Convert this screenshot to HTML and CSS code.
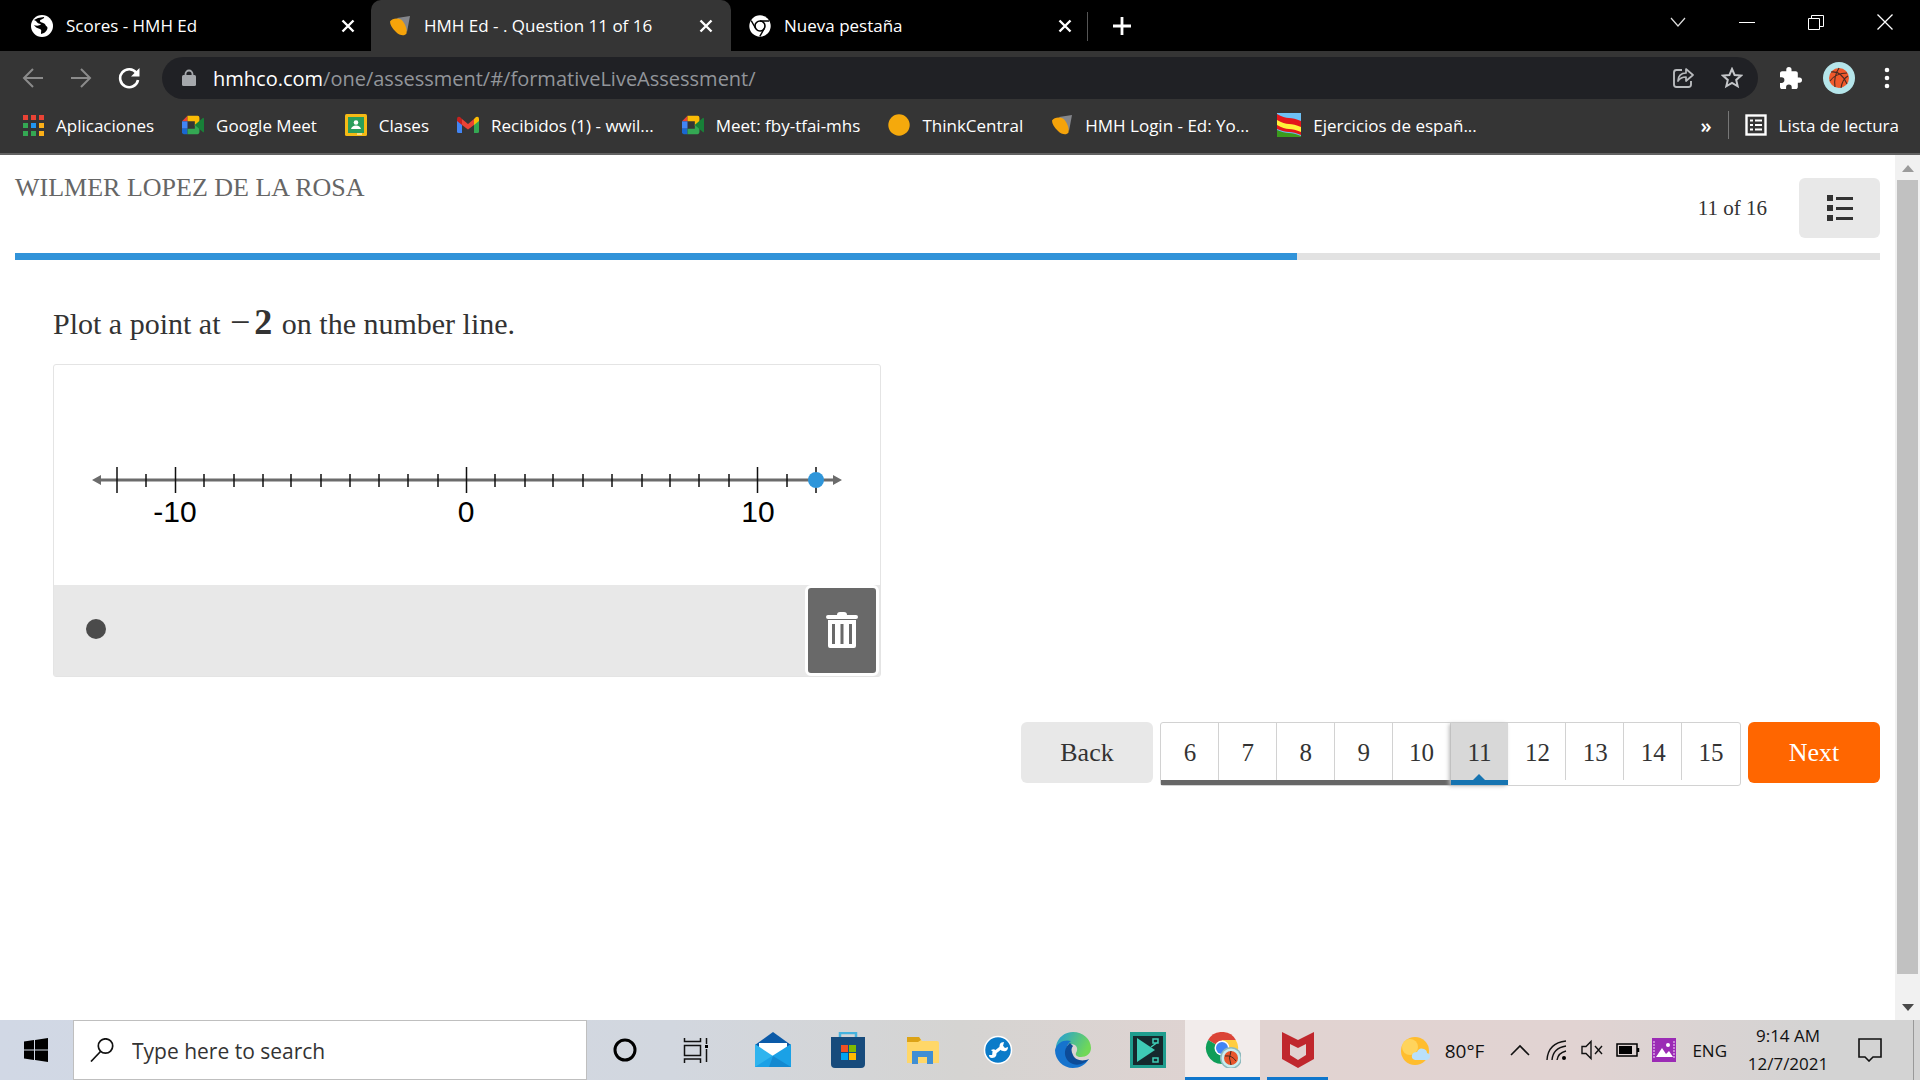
FILE: index.html
```html
<!DOCTYPE html>
<html lang="es">
<head>
<meta charset="utf-8">
<title>HMH Ed - . Question 11 of 16</title>
<link rel="stylesheet" href="styles.css">
</head>
<body>
<svg class="defs" aria-hidden="true">
  <symbol id="x" viewBox="0 0 22 22"><path d="M5.500 5.500l11 11M16.500 5.500l-11 11" stroke="#fff" stroke-width="2.400"/></symbol>
  <symbol id="hmh" viewBox="0 0 22 22"><path d="M8 3L21 1 18 17Z" fill="#85878c"/><path d="M1 6.500C3 3.500 8 2.500 12 4.500c4 3 6.500 10 5.500 14-2 3-7 2-10.500-1.500C3 13.500 1 9.500 1 6.500Z" fill="#f5a30a"/></symbol>
  <symbol id="meet" viewBox="0 0 24 22"><path d="M6 1L0 7h6Z" fill="#ea4335"/><path d="M0 7h6v8H0Z" fill="#4285f4"/><path d="M0 15h6v6H2q-2 0-2-2Z" fill="#1967d2"/><path d="M6 1h11q2 0 2 2v5l-5 4V7H6Z" fill="#fbbc04"/><path d="M6 15h8v-4l5-4v12q0 2-2 2H6Z" fill="#34a853"/><path d="M14 11l9-8q1 0 1 1v14q0 1-1 1Z" fill="#188038"/></symbol>
</svg>

<header class="browser">
  <div class="tabs">
    <div class="tab">
      <svg class="ico" viewBox="0 0 22 22"><circle cx="11" cy="11" r="11" fill="#fff"/><path d="M3 5l4-2 6-1c1 2-4 2-4 4 0 2 5 1 6 5 3 1 1 5-2 7l-3 1c0-3 1-4-1-5-3-1-5-2-6-4 2 1 6 1 7-1-2 0-4-1-5-3Z" fill="#000"/></svg>
      <span class="tab-title">Scores - HMH Ed</span>
      <button class="bare" aria-label="Close tab"><svg class="ico"><use href="#x"/></svg></button>
    </div>
    <div class="tab active">
      <svg class="ico"><use href="#hmh"/></svg>
      <span class="tab-title">HMH Ed - . Question 11 of 16</span>
      <button class="bare" aria-label="Close tab"><svg class="ico"><use href="#x"/></svg></button>
    </div>
    <div class="tab last">
      <svg class="ico" viewBox="0 0 22 22"><circle cx="11" cy="11" r="10.700" fill="#fff"/><circle cx="11" cy="11" r="5" fill="none" stroke="#000" stroke-width="1.600"/><path d="M11 6h9M6.700 13.500L2.200 5.700M15.300 13.500l-4.500 7.800" stroke="#000" stroke-width="1.400"/></svg>
      <span class="tab-title">Nueva pestaña</span>
      <button class="bare" aria-label="Close tab"><svg class="ico"><use href="#x"/></svg></button>
    </div>
    <button class="bare newtab" aria-label="New tab"><svg class="ico" viewBox="0 0 22 22"><path d="M11 2v18M2 11h18" stroke="#fff" stroke-width="2.800"/></svg></button>
    <div class="window">
      <button class="bare" aria-label="Search tabs"><svg class="ico" viewBox="0 0 22 22"><path d="M4 7l7 8 7-8" fill="none" stroke="#ddd" stroke-width="1.200"/></svg></button>
      <button class="bare" aria-label="Minimize"><svg class="ico" viewBox="0 0 22 22"><path d="M3 11.500h16" stroke="#fff"/></svg></button>
      <button class="bare" aria-label="Restore"><svg class="ico" viewBox="0 0 22 22"><path d="M3.500 7.500h11v11h-11ZM6.500 7.500v-3h12v11h-4" fill="none" stroke="#fff"/></svg></button>
      <button class="bare" aria-label="Close window"><svg class="ico" viewBox="0 0 22 22"><path d="M3.500 3.500l15 15M18.500 3.500l-15 15" stroke="#fff" stroke-width="1.300"/></svg></button>
    </div>
  </div>

  <div class="toolbar">
    <div class="nav-buttons">
      <button class="bare" aria-label="Back"><svg class="ico" viewBox="0 0 22 22"><path d="M21 11H3M11 2L2 11l9 9" fill="none" stroke="#8b8b8b" stroke-width="2"/></svg></button>
      <button class="bare" aria-label="Forward"><svg class="ico" viewBox="0 0 22 22"><path d="M1 11h18M11 2l9 9-9 9" fill="none" stroke="#8b8b8b" stroke-width="2"/></svg></button>
      <button class="bare" aria-label="Reload"><svg class="ico" viewBox="0 0 22 22"><path d="M18.500 6A9 9 0 1 0 20 13" fill="none" stroke="#fff" stroke-width="2.600"/><path d="M21.500 1v8.500H13Z" fill="#fff"/></svg></button>
    </div>
    <div class="omnibox">
      <svg class="lock" viewBox="0 0 14 18"><path d="M3.500 8V5a3.500 3.500 0 0 1 7 0v3" fill="none" stroke="#a5a8ac" stroke-width="1.800"/><rect y="6" width="14" height="11" rx="1.500" fill="#a5a8ac"/></svg>
      <span class="url"><b>hmhco.com</b>/one/assessment/#/formativeLiveAssessment/</span>
      <button class="bare" aria-label="Share"><svg class="ico" viewBox="0 0 22 22"><path d="M10 3H4.500Q2 3 2 5.500v12Q2 20 4.500 20h12q2.500 0 2.500-2.500V14" fill="none" stroke="#b8babd" stroke-width="1.900"/><path d="M6 14c0-5 3-8 8-8V2l7 6-7 6v-4c-4 0-6 1-8 4Z" fill="none" stroke="#b8babd" stroke-width="1.700" stroke-linejoin="round"/></svg></button>
      <button class="bare" aria-label="Bookmark"><svg class="ico" viewBox="0 0 22 22"><path d="M11 2l2.600 6 6.500.600-4.900 4.300 1.500 6.400L11 16l-5.700 3.300 1.500-6.400L1.900 8.600 8.400 8Z" fill="none" stroke="#c4c6c9" stroke-width="2"/></svg></button>
    </div>
    <div class="tools">
      <button class="bare" aria-label="Extensions"><svg class="ico" viewBox="2 1 21 21"><path d="M20.500 11H19V7c0-1.100-.900-2-2-2h-4V3.500a2.500 2.500 0 0 0-5 0V5H4c-1.100 0-2 .900-2 2v3.800h1.500a2.700 2.700 0 0 1 0 5.400H2V20c0 1.100.900 2 2 2h3.800v-1.500a2.700 2.700 0 0 1 5.400 0V22H17c1.100 0 2-.900 2-2v-4h1.500a2.500 2.500 0 0 0 0-5Z" fill="#fff"/></svg></button>
      <button class="bare" aria-label="Profile"><svg class="avatar" viewBox="0 0 32 32"><circle cx="16" cy="16" r="16" fill="#b5e5ea"/><circle cx="16" cy="16" r="10" fill="#f0592b"/><path d="M8 10c7-1 12 2 16 12M7 19c3-5 10-8 17-8M12 25c-1-7 0-13 4-19M18 26c1-6 3-10 7-12" fill="none" stroke="#4a2a20" stroke-width="1.100"/></svg></button>
      <button class="bare" aria-label="Menu"><svg class="ico" viewBox="0 0 22 22"><g fill="#fff"><circle cx="11" cy="3" r="2.300"/><circle cx="11" cy="11" r="2.300"/><circle cx="11" cy="19" r="2.300"/></g></svg></button>
    </div>
  </div>

  <nav class="bookmarks">
    <a href="#"><svg class="ico" viewBox="0 0 22 22"><path d="M1 1h5v5H1ZM9 1h5v5H9ZM17 1h5v5h-5Z" fill="#ea4335"/><path d="M1 9h5v5H1ZM1 17h5v5H1ZM9 17h5v5H9Z" fill="#34a853"/><path d="M9 9h5v5H9Z" fill="#2196f3"/><path d="M17 9h5v5h-5ZM17 17h5v5h-5Z" fill="#fbb018"/></svg>Aplicaciones</a>
    <a href="#"><svg class="ico"><use href="#meet"/></svg>Google Meet</a>
    <a href="#"><svg class="ico" viewBox="0 0 22 22"><rect width="22" height="22" rx="1.500" fill="#f5ba15"/><rect x="3" y="3" width="16" height="16" fill="#2b9e5b"/><circle cx="11" cy="8.500" r="2.300" fill="#fff"/><path d="M6 15q1-3.500 5-3.500t5 3.500Z" fill="#fff"/><path d="M12 19h5v2h-5Z" fill="#fff" opacity=".5"/></svg>Clases</a>
    <a href="#"><svg class="ico" viewBox="0 0 22 22"><path d="M0 6l5 4v9H1.500Q0 19 0 17.500Z" fill="#4285f4"/><path d="M22 6l-5 4v9h3.500q1.500 0 1.500-1.500Z" fill="#34a853"/><path d="M5 5l6 5 6-5v6l-6 4.500L5 11Z" fill="#ea4335"/><path d="M0 7V5q0-3 3-2l2 2v6Z" fill="#c5221f"/><path d="M22 7V5q0-3-3-2l-2 2v6Z" fill="#fbbc04"/></svg>Recibidos (1) - wwil...</a>
    <a href="#"><svg class="ico"><use href="#meet"/></svg>Meet: fby-tfai-mhs</a>
    <a href="#"><svg class="ico" viewBox="0 0 22 22"><circle cx="11" cy="11" r="10.700" fill="#f5a90c"/></svg>ThinkCentral</a>
    <a href="#"><svg class="ico"><use href="#hmh"/></svg>HMH Login - Ed: Yo...</a>
    <a href="#"><svg class="flag" viewBox="0 0 24 24"><path d="M0 0h24v24H0Z" fill="#6ec1f5"/><path d="M0 1q7 4 12 4t12 3v14q-7-3-12-3T0 16Z" fill="#e3171b"/><path d="M0 7q7 4 12 4t12 3v5q-7-3-12-3T0 12Z" fill="#fff23a"/><path d="M0 17q7 3 12 3t12 3v1H0Z" fill="#3a9a1c"/></svg>Ejercicios de españ...</a>
    <button class="bare more" aria-label="More bookmarks">»</button>
    <a class="reading" href="#"><svg class="ico" viewBox="0 0 22 22"><rect x="1.500" y="1.500" width="19" height="19" fill="none" stroke="#fff" stroke-width="2.400"/><path d="M5 6.500h3M5 11h3M5 15.500h3M10 6.500h7M10 11h7M10 15.500h7" stroke="#fff" stroke-width="2.200"/></svg>Lista de lectura</a>
  </nav>
</header>

<div class="viewport">
  <main class="page">
    <div class="head">
      <span class="student">WILMER LOPEZ DE LA ROSA</span>
      <span class="count">11 of 16</span>
      <button class="list-button" aria-label="Question list"><svg viewBox="0 0 26 26"><path d="M0 0h6v6H0ZM0 10h6v6H0ZM0 20h6v6H0ZM9 2h17v3H9ZM9 12h17v3H9ZM9 22h17v3H9Z" fill="#333"/></svg></button>
    </div>
    <div class="progress"><div class="progress-fill" style="width:68.75%"></div></div>

    <section class="question">
      <p class="prompt">Plot a point at <span class="math"><span class="minus">−</span><b>2</b></span> on the number line.</p>
      <div class="card">
        <svg class="line" viewBox="0 0 826 220">
          <path d="M46 115h736" stroke="#6b6b6b" stroke-width="3"/>
          <path d="M38 115l9-5v10ZM788 115l-9-5v10Z" fill="#6b6b6b"/>
          <path d="M92 109v13M150 109v13M180 109v13M209 109v13M237 109v13M267 109v13M296 109v13M325 109v13M354 109v13M384 109v13M441 109v13M471 109v13M499 109v13M529 109v13M558 109v13M588 109v13M616 109v13M645 109v13M675 109v13M733 109v13" stroke="#111" stroke-width="1.500"/>
          <path d="M63 102v26M121.500 102v26M412.500 102v26M703.500 102v26M762 102v26" stroke="#111" stroke-width="1.500"/>
          <circle cx="762" cy="115" r="8" fill="#2f96da"/>
          <g class="labels"><text x="121" y="157">-10</text><text x="412" y="157">0</text><text x="704" y="157">10</text></g>
        </svg>
        <div class="card-tools">
          <button class="bare point-tool" aria-label="Point"><svg class="point" viewBox="0 0 20 20"><circle cx="10" cy="10" r="10" fill="#4b4b4b"/></svg></button>
          <button class="trash" aria-label="Delete"><svg viewBox="0 0 32 36"><path d="M11 3Q11 0 14 0h4q3 0 3 3h9q2 0 2 2t-2 2H2Q0 7 0 5t2-2ZM2 8h28v26q0 2-2 2H4q-2 0-2-2Z" fill="#fff"/><path d="M7.500 12v20M16 12v20M24.500 12v20" stroke="#696969" stroke-width="3"/></svg></button>
        </div>
      </div>
    </section>

    <nav class="pager">
      <button class="back">Back</button>
      <div class="pages">
        <button class="done">6</button><button class="done">7</button><button class="done">8</button><button class="done">9</button><button class="done">10</button><button class="current">11</button><button>12</button><button>13</button><button>14</button><button>15</button>
      </div>
      <button class="next">Next</button>
    </nav>
  </main>
  <div class="scrollbar">
    <svg viewBox="0 0 12 8"><path d="M0 8L6 1l6 7Z" fill="#9b9b9b"/></svg>
    <div class="thumb"></div>
    <svg viewBox="0 0 12 8"><path d="M0 0l6 7 6-7Z" fill="#4a4a4a"/></svg>
  </div>
</div>

<footer class="taskbar">
  <button class="start" aria-label="Start"><svg class="t24" viewBox="0 0 24 24"><path d="M0 3.400L10 2v9.500H0ZM11 1.900L24 0v11.500H11ZM0 12.500h10V22L0 20.600ZM11 12.500h13V24l-13-1.900Z"/></svg></button>
  <label class="search"><svg class="t24" viewBox="0 0 24 24"><circle cx="15.500" cy="8" r="7.200" fill="none" stroke="#111" stroke-width="1.700"/><path d="M10.500 13.500L1 23.500" stroke="#111" stroke-width="1.700"/></svg><input type="text" placeholder="Type here to search" aria-label="Search"></label>
  <div class="apps">
    <button aria-label="Cortana"><svg viewBox="0 0 36 36"><circle cx="18" cy="18" r="10" fill="none" stroke="#000" stroke-width="3"/></svg></button>
    <button class="views" aria-label="Task view"><svg viewBox="0 0 36 36"><path d="M6.500 6v3.500h16V6M6.500 13.500h16v10h-16ZM6.500 31v-4h16v4M28.500 6v6M28.500 17v13" fill="none" stroke="#111" stroke-width="1.500"/><path d="M27 13h3v3h-3Z"/></svg></button>
    <button aria-label="Mail"><svg viewBox="0 0 36 36"><path d="M0 13L18 0l18 13-18 12Z" fill="#0b5aa8"/><path d="M4 11h28v14H4Z" fill="#fff"/><path d="M0 12l18 12v11H0Z" fill="#2fb4ee"/><path d="M36 12L0 35h36Z" fill="#1ba1e6"/><path d="M18 24l18 11H14Z" fill="#1489d0"/></svg></button>
    <button aria-label="Store"><svg viewBox="0 0 36 36"><path d="M10 9V1h16v8" fill="none" stroke="#45b3df" stroke-width="2.500"/><path d="M1 5h34v27q0 4-4 4H5q-4 0-4-4Z" fill="#174b7c"/><path d="M11 13h7v7h-7Z" fill="#f25022"/><path d="M19 13h7v7h-7Z" fill="#7fba00"/><path d="M11 21h7v7h-7Z" fill="#00a4ef"/><path d="M19 21h7v7h-7Z" fill="#ffb900"/></svg></button>
    <button aria-label="File Explorer"><svg viewBox="0 0 36 36"><path d="M2 5h12l3 4h15q2 0 2 2v20H2Z" fill="#ffd768"/><path d="M2 5h12l2 3-3 2H2Z" fill="#dca316"/><path d="M7 19h21v13h-6v-7h-9v7H7Z" fill="#408fd4"/></svg></button>
    <button aria-label="Support tool"><svg viewBox="0 0 36 36"><circle cx="18" cy="18" r="13.500" fill="#0a7bc9" stroke="#fff" stroke-width="1.500"/><path d="M13 22l10-8" stroke="#fff" stroke-width="3"/><path d="M16 19q2 7-4 7-3 0-3-3l3 0 1-3-2-2q4-2 5 1ZM20 17q-2-7 4-7l-1 4 2 2 3-1q0 5-5 4-2 0-3-2Z" fill="#fff"/></svg></button>
    <button aria-label="Edge"><svg viewBox="0 0 36 36"><defs><linearGradient id="eg" x2="1" y2=".4"><stop stop-color="#219bdc"/><stop offset="1" stop-color="#70d857"/></linearGradient></defs><path d="M1 14C3 5 10 0 18 0c10 0 18 7 18 16 0 6-5 9-10 9-4 0-6-2-5-4 3-5 0-9-5-9-6 0-12 3-15 7Z" fill="url(#eg)"/><path d="M0 18C2 10 10 7 16 9c-6 4-6 14 1 19 5 3 11 3 17-1-4 6-9 9-16 9C8 36 0 28 0 18Z" fill="#1673cd"/><path d="M15 11c-8 6-6 18 3 21 6 2 12-1 16-5-7 3-14 1-16-4-2-4-2-7 0-9Z" fill="#0d4c98"/></svg></button>
    <button aria-label="Video editor"><svg viewBox="0 0 36 36"><path d="M0 0h36v36H0Z" fill="#1f9d8e"/><path d="M3 4h30v29H3Z" fill="#15292d"/><path d="M7 6l18 12L7 30Z" fill="#3ecbb5"/><path d="M23 7h5v4h-5ZM28 10l-7 5M23 26h5v4h-5Z" stroke="#3ecbb5" stroke-width="1.500" fill="none"/></svg></button>
    <button class="open" aria-label="Chrome"><svg viewBox="0 0 36 36"><circle cx="17" cy="16" r="16" fill="#fff"/><path d="M17 16L3.100 8a16 16 0 0 1 27.800 0Z" fill="#db4437"/><path d="M17 16L3.100 8A16 16 0 0 0 17 32l7-12Z" fill="#0f9d58"/><path d="M17 16l0 16A16 16 0 0 0 30.900 8H17Z" fill="#ffcd40"/><circle cx="17" cy="16" r="7.500" fill="#fff"/><circle cx="17" cy="16" r="6" fill="#4285f4"/><circle cx="26" cy="26" r="11" fill="#8fb9bd"/><circle cx="26" cy="26" r="9.500" fill="#c8eef0"/><circle cx="26" cy="26" r="7" fill="#e8562b"/><path d="M20 24q7-1 11 5M26 19q-3 7 0 14" fill="none" stroke="#4a2a20"/></svg></button>
    <button class="running" aria-label="McAfee"><svg viewBox="0 0 36 36"><path d="M2 0l16 8L34 0v27l-16 9-16-9ZM10 12v11l8 5 8-5V12l-8 4Z" fill="#c0272d" fill-rule="evenodd"/></svg></button>
  </div>
  <div class="tray">
    <div class="weather"><svg class="t30" viewBox="0 0 30 30"><circle cx="14" cy="15" r="14" fill="#ffbd2e"/><circle cx="9" cy="11" r="8" fill="#ffd45c"/><path d="M14 24q-4-1-3-5 1-3 5-3 2-5 7-3 3 1 3 4 4 1 3 4-1 3-4 3Z" fill="#b9e0fb"/></svg>80°F</div>
    <div class="tray-icons">
      <svg class="t24" viewBox="0 0 24 24"><path d="M3 17l9-9 9 9" fill="none" stroke="#111" stroke-width="1.600"/></svg>
      <svg class="t24" viewBox="0 0 24 24"><path d="M3 22Q4 5 22 3M8 22Q9 10 22 8M13 22q1-7 9-9" fill="none" stroke="#111" stroke-width="1.400"/><circle cx="20" cy="20" r="2"/></svg>
      <svg class="t24" viewBox="0 0 24 24"><path d="M2 8.500h4l5-5v17l-5-5H2ZM15 8l7 8M22 8l-7 8" fill="none" stroke="#111" stroke-width="1.400"/></svg>
      <svg class="t24" viewBox="0 0 24 24"><path d="M1 6h20v12H1ZM22.500 10v4" fill="none" stroke="#000" stroke-width="1.500"/><path d="M3 8h13v8H3Z"/></svg>
      <svg class="t24" viewBox="0 0 24 24"><path d="M0 0h24v24H0Z" fill="#9b2bb5"/><path d="M2 3v18M22 3v18" stroke="#d9a0e4" stroke-width="1.500" stroke-dasharray="2 1"/><path d="M4 19l6-9 4 6 3-3 4 6Z" fill="#fff"/><circle cx="16" cy="7" r="2" fill="#fff"/></svg>
    </div>
    <span class="lang">ENG</span>
    <div class="clock"><span>9:14 AM</span><span>12/7/2021</span></div>
    <button class="bare" aria-label="Notifications"><svg class="t24" viewBox="0 0 24 24"><path d="M1 1h22v18h-8l-4 4-4-4H1Z" fill="none" stroke="#111" stroke-width="1.600"/></svg></button>
    <div class="peek"></div>
  </div>
</footer>
</body>
</html>
```
FILE: styles.css
```css
* { box-sizing: border-box; }

body {
  margin: 0;
  min-height: 100vh;
  display: flex;
  flex-direction: column;
  background: #fff;
  font-family: "Open Sans", "Noto Sans", sans-serif;
}

button { font: inherit; color: inherit; border: 0; padding: 0; background: none; }
a { color: inherit; text-decoration: none; }
svg { display: block; flex: none; }
.defs { position: absolute; width: 0; height: 0; }
.bare { display: flex; align-items: center; }
.ico { width: 22px; height: 22px; }

/* Browser chrome */
.browser { background: #353535; color: #fff; border-bottom: 2px solid #626262; font-size: 17px; }
.tabs { display: flex; height: 51px; background: #000; }
.tab { display: flex; align-items: center; gap: 13px; width: 360px; padding: 0 14px 0 18px; }
.tab:first-child { width: 371px; padding-left: 31px; padding-right: 12px; }
.tab.active { background: #353535; border-radius: 10px 10px 0 0; }
.tab.last { width: 357px; padding-right: 12px; position: relative; }
.tab.last::after { content: ""; position: absolute; right: 0; top: 12px; width: 1px; height: 29px; background: #555; }
.tab-title { flex: 1; white-space: nowrap; }
.newtab { padding-left: 23px; }
.window { margin-left: auto; display: flex; gap: 47px; padding: 0 24px 8px 0; }

.toolbar { display: flex; align-items: center; padding: 6px 22px 0; }
.nav-buttons { display: flex; gap: 26px; padding-right: 22px; }
.omnibox { flex: 1; display: flex; align-items: center; gap: 27px; height: 42px; padding: 0 15px 0 20px; border-radius: 21px; background: #202125; }
.lock { width: 14px; height: 18px; }
.url { flex: 1; margin-left: -10px; font-size: 20px; color: #92959a; }
.url b { font-weight: 400; color: #fff; }
.tools { display: flex; align-items: center; gap: 21px; padding-left: 22px; }
.avatar { width: 32px; height: 32px; }

.bookmarks { display: flex; align-items: center; gap: 28px; height: 54px; padding: 0 21px 2px 22px; white-space: nowrap; }
.bookmarks a { display: flex; align-items: center; gap: 12px; }
.flag { width: 24px; height: 24px; }
.more { margin-left: auto; font-size: 20px; font-weight: 600; }
.bookmarks .reading { padding-left: 16px; margin-left: -12px; border-left: 1px solid #777; height: 28px; }

/* Assessment page */
.viewport { flex: 1; display: flex; }
.page { flex: 1; padding: 23px 15px 0; font-family: "Liberation Serif", serif; color: #333; }
.head { display: flex; align-items: center; height: 60px; }
.student { flex: 1; align-self: flex-start; font-size: 26px; line-height: 20px; color: #666; }
.count { font-size: 21px; }
.list-button { display: grid; place-items: center; width: 81px; height: 60px; margin-left: 32px; border-radius: 6px; background: #e8e8e8; }
.list-button svg { width: 26px; height: 26px; }
.progress { height: 7px; margin-top: 15px; background: #e2e2e2; }
.progress-fill { height: 7px; background: #3193d9; }
.question { padding: 44px 0 0 38px; }
.prompt { margin: 0 0 20px; font-size: 30px; line-height: 40px; }
.math { margin: 0 2px; font-size: 36px; line-height: 36px; }
.minus { margin-right: 4px; }
.card { max-width: 828px; border: 1px solid #e4e4e4; border-radius: 3px; }
.line { width: 100%; height: auto; }
.labels { font: 30px "Liberation Sans", sans-serif; fill: #000; text-anchor: middle; }
.card-tools { display: flex; align-items: center; justify-content: space-between; height: 91px; padding: 0 1px 0 32px; background: #e8e8e8; }
.point-tool { padding-bottom: 4px; }
.point { width: 20px; height: 20px; }
.trash { display: grid; place-items: center; width: 74px; height: 91px; padding-bottom: 2px; border: 3px solid #fff; border-radius: 6px; background: #696969; }
.trash svg { width: 32px; height: 36px; }

.pager { display: flex; justify-content: flex-end; align-items: flex-start; gap: 7px; margin-top: 45px; font-size: 26px; }
.back, .next { width: 132px; height: 61px; border-radius: 6px; background: #e8e8e8; }
.next { background: #ff6600; color: #fff; }
.pages { display: flex; width: 581px; height: 64px; border: 1px solid #d2d2d2; border-radius: 3px; }
.pages button { flex: 1; padding-top: 2px; border-bottom: 5px solid transparent; box-shadow: inset -1px 0 #d2d2d2; font-size: 25px; }
.pages button:last-child { box-shadow: none; }
.pages .done { border-bottom-color: #666; }
.pages .current { position: relative; background: #d8d8d8; border-bottom-color: #1674b1; box-shadow: -2px 1px 4px #bbb; }
.current::after { content: ""; position: absolute; left: calc(50% - 6px); bottom: 0; border: 6px solid transparent; border-top: 0; border-bottom-color: #1674b1; }

.scrollbar { display: flex; flex-direction: column; align-items: center; width: 25px; background: #f1f1f1; padding: 9px 0 8px; gap: 8px; }
.scrollbar svg { width: 12px; height: 8px; }
.thumb { flex: 1; width: 21px; margin-bottom: 22px; background: #c1c1c1; }

/* Taskbar */
.taskbar { display: flex; height: 60px; background: linear-gradient(90deg, #d1d8e5 0%, #d2d7df 35%, #d5d4d2 50%, #e1d3d1 65%, #e1d3d2 82%, #d3d3d3 95%); color: #111; }
.start { width: 73px; padding-left: 24px; }
.t24 { width: 24px; height: 24px; }
.t30 { width: 30px; height: 30px; }
.search { display: flex; align-items: center; gap: 18px; width: 514px; padding-left: 16px; background: #fff; border: 1px solid #bfbfbf; }
.search input { flex: 1; border: 0; outline: 0; padding: 2px 0 0; font: 21px "Open Sans", sans-serif; }
.search input::placeholder { color: #333; opacity: 1; }
.apps { display: flex; }
.apps button { display: grid; place-items: center; width: 75px; border-bottom: 3px solid transparent; border-top: 3px solid transparent; }
.apps .views { width: 68px; margin-right: 5px; }
.apps svg { width: 36px; height: 36px; }
.apps .open { background: #f2eceb; border-top-color: #f2eceb; border-bottom-color: #0f76cc; }
.apps .running { width: 61px; margin-left: 7px; border-bottom-color: #0f76cc; }
.tray { margin-left: auto; display: flex; align-items: center; font-size: 19px; }
.weather { display: flex; align-items: center; gap: 14px; padding-top: 2px; }
.tray-icons { display: flex; gap: 12px; padding: 0 16px 0 24px; }
.lang { font-size: 17px; }
.clock { display: flex; flex-direction: column; align-items: center; width: 84px; margin: 0 28px 0 19px; font-size: 17px; line-height: 28px; }
.peek { align-self: stretch; width: 7px; margin-left: 31px; border-left: 1px solid #999; }
```
